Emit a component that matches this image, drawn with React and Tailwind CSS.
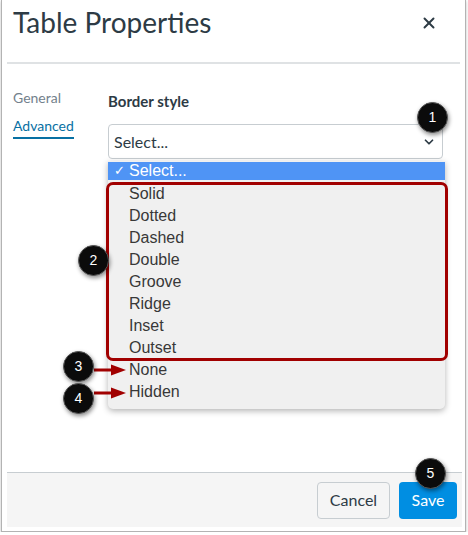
import React from 'react';
import { X, ChevronDown } from 'lucide-react';

const options = ['Solid', 'Dotted', 'Dashed', 'Double', 'Groove', 'Ridge', 'Inset', 'Outset', 'None', 'Hidden'];

const Callout = ({ n, x, y }) => (
  <div
    className="absolute w-[31px] h-[31px] rounded-full bg-[#0b0b0b] text-white flex items-center justify-center text-[14px] shadow-[1px_2px_4px_rgba(0,0,0,0.45)] border border-[#555]"
    style={{ left: x - 15, top: y - 15, fontFamily: '"Liberation Sans", Arial, sans-serif' }}
  >
    {n}
  </div>
);

const Arrow = ({ y }) => (
  <svg className="absolute" style={{ left: 92, top: y - 6 }} width="34" height="12" viewBox="0 0 34 12">
    <line x1="0" y1="6" x2="20" y2="6" stroke="#a10000" strokeWidth="3" />
    <polygon points="17,0.5 32,6 17,11.5" fill="#a10000" />
  </svg>
);

export default function App() {
  return (
    <div
      className="relative ml-[1px] w-[465px] h-[532px] bg-white border-x border-b border-[#b3b3b3] pl-[5px] pr-[3px] pb-[4px] flex flex-col shadow-[0_1px_3px_rgba(0,0,0,0.25)]"
      style={{ fontFamily: 'Lato, "Noto Sans", sans-serif' }}
    >
      {/* header */}
      <div className="h-[64px] shrink-0 border-b-2 border-[#dfe2e4] flex items-start justify-between pl-[6px] pr-[22px] pt-[4px] mr-[2px]">
        <h1 className="text-[28px] leading-[36px] text-[#2d3b45]">Table Properties</h1>
        <X size={18} strokeWidth={2.6} className="text-[#2d3b45] mt-[10px]" />
      </div>

      {/* body */}
      <div className="flex-1 flex pl-[6px]">
        <div className="w-[95px] shrink-0 pt-[24px] flex flex-col items-start">
          <div className="text-[14px] leading-[20px] text-[#73818c]">General</div>
          <div className="mt-[8px] text-[14px] leading-[20px] text-[#0770a3] border-b-2 border-[#0770a3] pb-[1px]">Advanced</div>
        </div>
        <div className="flex-1 pt-[26px] pr-[19px]">
          <div className="text-[15px] leading-[22px] font-bold text-[#2d3b45]">Border style</div>
          <div className="mt-[12px] h-[35px] border border-[#c7cdd1] rounded-[4px] flex items-center justify-between pl-[5px] pr-[6px] text-[16px] text-[#2d3b45]">
            <span>Select...</span>
            <ChevronDown size={14} strokeWidth={3} className="text-[#2d3b45] mt-[1px]" />
          </div>
        </div>
      </div>

      {/* footer */}
      <div className="h-[55px] shrink-0 bg-[#f5f5f5] border-t border-[#c7cdd1] flex items-center justify-end gap-[9px] pr-[5px]">
        <button className="h-[37px] w-[73px] rounded-[4px] border border-[#c7cdd1] bg-[#f5f5f5] text-[#2d3b45] text-[16px]">Cancel</button>
        <button className="h-[37px] w-[58px] rounded-[4px] bg-[#008ee2] text-white text-[16px]">Save</button>
      </div>

      {/* dropdown menu */}
      <div
        className="absolute left-[106px] top-[161px] w-[337px] bg-[#f0f0f0] rounded-b-[5px] pt-[1px] pb-[6px] shadow-[0_2px_6px_rgba(0,0,0,0.3)] text-[16px] text-[#383838]"
        style={{ fontFamily: '"Liberation Sans", Arial, sans-serif' }}
      >
        <div className="h-[18px] mb-[3px] bg-[#4f94f5] text-white flex items-center">
          <span className="w-[21px] pl-[6px] text-[13px]">✓</span>
          <span>Select...</span>
        </div>
        {options.map((o) => (
          <div key={o} className="h-[22px] flex items-center pl-[21px]">{o}</div>
        ))}
      </div>

      {/* highlight box */}
      <div className="absolute left-[104px] top-[182px] w-[342px] h-[179px] border-[3px] border-[#a10000] rounded-[7px]" />

      <Arrow y={370} />
      <Arrow y={393} />

      <Callout n="1" x={430} y={117} />
      <Callout n="2" x={91} y={260} />
      <Callout n="3" x={76} y={366} />
      <Callout n="4" x={76} y={398} />
      <Callout n="5" x={428} y={473} />
    </div>
  );
}
